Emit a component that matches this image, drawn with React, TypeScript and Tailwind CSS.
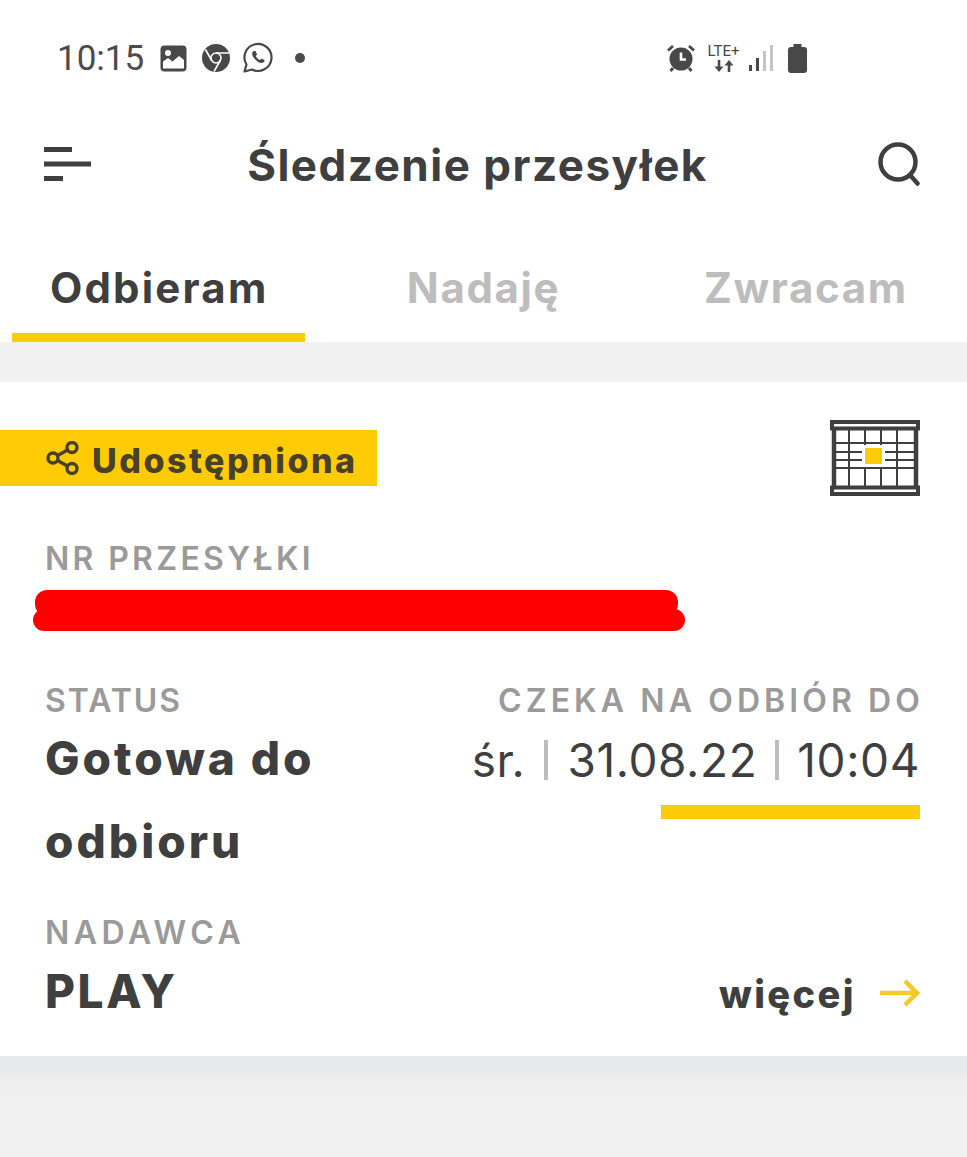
const font = { fontFamily: '"Inter", "Noto Sans", sans-serif' };

function PhotoIcon() {
  return (
    <svg width="27" height="27" viewBox="0 0 27 27">
      <rect x="0.5" y="0.5" width="26" height="26" rx="4" fill="#484848" />
      <circle cx="8" cy="8" r="3" fill="#fff" />
      <path d="M3 23.500v-7l5-3.500 4.500 3.500L19 11l5 4v8.500z" fill="#fff" />
    </svg>
  );
}

function ChromeIcon() {
  return (
    <svg width="28" height="28" viewBox="0 0 28 28">
      <circle cx="14" cy="14" r="14" fill="#484848" />
      <circle cx="14" cy="14" r="5" fill="#484848" stroke="#fff" strokeWidth="1.600" />
      <path d="M14 9h13M9.700 16.500L3.500 5.500M18.300 16.500L12 27.500" stroke="#fff" strokeWidth="1.600" fill="none" />
    </svg>
  );
}

function WhatsappIcon() {
  return (
    <svg width="32" height="32" viewBox="0 0 32 32" fill="none">
      <path d="M2.500 29.500l2-7A13.500 13.500 0 1 1 10 27.500z" stroke="#484848" strokeWidth="2.200" strokeLinejoin="round" />
      <path d="M11.500 9c-2 1.500-1.800 4 .5 7s5 5 7.500 5c2 0 3.500-1.500 3-3l-3-1.500-1.500 1.500c-1.500-.5-3.500-2.500-4.200-4l1.300-1.500L13.500 9z" fill="#484848" />
    </svg>
  );
}

function AlarmIcon() {
  return (
    <svg width="28" height="28" viewBox="0 0 28 28">
      <circle cx="14" cy="15" r="11.500" fill="#484848" />
      <path d="M14 8.500V15.500H19" stroke="#fff" strokeWidth="2.600" fill="none" />
      <path d="M1 6.500L6 2M27 6.500L22 2M6 24l-2.500 3M22 24l2.500 3" stroke="#484848" strokeWidth="2.800" fill="none" />
    </svg>
  );
}

function SignalIcon() {
  return (
    <svg width="25" height="28" viewBox="0 0 25 28">
      <rect x="0" y="21" width="3" height="6" fill="#484848" />
      <rect x="7" y="14" width="3" height="13" fill="#484848" />
      <rect x="14" y="7" width="3" height="20" fill="#c4c4c4" />
      <rect x="21" y="1" width="3" height="26" fill="#c4c4c4" />
    </svg>
  );
}

function BatteryIcon() {
  return (
    <svg width="19" height="29" viewBox="0 0 19 29">
      <path d="M5.500 0h8v3h2.500a3 3 0 0 1 3 3V26a3 3 0 0 1-3 3H3a3 3 0 0 1-3-3V6a3 3 0 0 1 3-3h2.500z" fill="#484848" />
    </svg>
  );
}

function DataArrows() {
  return (
    <svg width="20" height="12" viewBox="0 0 20 12" fill="none" stroke="#484848">
      <path d="M5 0V8" strokeWidth="2.600" />
      <path d="M0.500 6.500H9.500L5 12z" fill="#484848" strokeWidth="0" />
      <path d="M15 12V4" strokeWidth="2.600" />
      <path d="M10.500 5.500H19.500L15 0z" fill="#484848" strokeWidth="0" />
    </svg>
  );
}

function StatusBar() {
  return (
    <div className="flex h-[116px] items-center pl-[57px] pr-[160px]">
      <span className="text-[35px] leading-none text-[#4b4b4b]" style={{ fontFamily: '"Roboto", sans-serif' }}>10:15</span>
      <div className="ml-[16px] flex items-center"><PhotoIcon /></div>
      <div className="ml-[15px] flex items-center"><ChromeIcon /></div>
      <div className="ml-[12px] flex items-center"><WhatsappIcon /></div>
      <div className="ml-[21px] h-[10px] w-[10px] rounded-full bg-[#4b4b4b]" />
      <div className="ml-auto flex items-center">
        <AlarmIcon />
        <div className="ml-[11px] flex w-[35px] flex-col items-center gap-[1px] text-[#484848]" style={{ fontFamily: '"Roboto", sans-serif' }}>
          <span className="text-[15px] leading-[15px]">LTE+</span>
          <DataArrows />
        </div>
        <div className="ml-[8px]"><SignalIcon /></div>
        <div className="ml-[14px]"><BatteryIcon /></div>
      </div>
    </div>
  );
}

function Header() {
  return (
    <div className="flex h-[98px] items-center justify-between pl-[44px] pr-[47px]">
      <svg width="48" height="36" viewBox="0 0 48 36">
        <path d="M0 2.500H28M0 17H47M0 31.500H19" stroke="#3f3f3f" strokeWidth="5" fill="none" />
      </svg>
      <h1 className="mr-[15px] text-[44px] font-bold leading-none tracking-[1.5px] text-[#3f3f3f]">Śledzenie przesyłek</h1>
      <svg className="-mt-[2px]" width="42" height="44" viewBox="0 0 42 44" fill="none" stroke="#3f3f3f" strokeWidth="4.500" strokeLinecap="round">
        <circle cx="20" cy="20" r="17.500" />
        <path d="M32 33l7.500 8.500" />
      </svg>
    </div>
  );
}

function Tabs() {
  return (
    <div className="grid h-[128px] grid-cols-3">
      <div className="flex flex-col">
        <div className="flex flex-1 items-center justify-center pt-[27px] pr-[4px] text-[42px] font-bold tracking-[2.2px] text-[#3f3f3f]">Odbieram</div>
        <div className="ml-[12px] h-[9px] w-[293px] bg-[#fccb0a]" />
      </div>
      <div className="flex items-center justify-center pt-[18px] text-[42px] font-bold tracking-[1.6px] text-[#bdbdbd]">Nadaję</div>
      <div className="flex items-center justify-center pt-[18px] text-[42px] font-bold tracking-[1.6px] text-[#bdbdbd]">Zwracam</div>
    </div>
  );
}

function CalendarIcon() {
  return (
    <svg width="90" height="76" viewBox="0 0 90 76">
      <path d="M2 2H88V8.500H2zM2 67.500H88V74H2z" fill="#fff" stroke="#3f3f3f" strokeWidth="4" />
      <path d="M4 9V67M86 9V67" stroke="#3f3f3f" strokeWidth="4.500" />
      <path d="M19 9V67M35 9V67M51 9V67M67 9V67M4 23H86M4 32H86M4 40H86M4 48H86" stroke="#3f3f3f" strokeWidth="2" />
      <rect x="32" y="25" width="23" height="22" fill="#fff" />
      <rect x="35" y="28" width="17" height="16" fill="#fccb0a" />
    </svg>
  );
}

function Card() {
  return (
    <div className="bg-white pt-[38px] pb-[34px]">
      <div className="flex items-start justify-between pr-[47px]">
        <div className="mt-[10px] flex h-[56px] w-[377px] items-center bg-[#fecb05] pl-[46px]">
          <svg className="-mt-[1px]" width="33" height="34" viewBox="0 0 33 34" fill="none" stroke="#47402a" strokeWidth="3.400">
            <circle cx="7" cy="17" r="5" />
            <circle cx="26" cy="6.500" r="5" />
            <circle cx="26" cy="27.500" r="5" />
            <path d="M11.500 14.500L21.500 9M11.500 19.500L21.500 25" />
          </svg>
          <span className="ml-[13px] pt-[5px] text-[34px] font-extrabold leading-none tracking-[2.5px] text-[#47402a]">Udostępniona</span>
        </div>
        <CalendarIcon />
      </div>

      <div className="mt-[46px] pl-[45px] text-[32px] font-semibold leading-[34px] tracking-[3.300px] text-[#9a9a9a]">NR PRZESYŁKI</div>
      <div className="mt-[14px]">
        <div className="ml-[35px] h-[26px] w-[643px] rounded-[12px] bg-[#ff0000]" />
        <div className="ml-[33px] -mt-[7px] h-[22px] w-[652px] rounded-[11px] bg-[#ff0000]" />
      </div>

      <div className="mt-[52px] flex justify-between pl-[45px] pr-[47px]">
        <div>
          <div className="text-[32px] font-semibold leading-[36px] tracking-[2px] text-[#9a9a9a]">STATUS</div>
          <div className="-mt-[2px] w-[320px] text-[46px] font-extrabold leading-[83px] tracking-[3px] text-[#3f3f3f]">Gotowa do odbioru</div>
        </div>
        <div className="flex flex-col items-end">
          <div className="-mr-[4px] text-[32px] font-semibold leading-[36px] tracking-[4.100px] text-[#9a9a9a]">CZEKA NA ODBIÓR DO</div>
          <div className="mt-[10px] flex h-[62px] items-center text-[46px] tracking-[0.6px] text-[#3f3f3f]">
            <span>śr.</span>
            <span className="mx-[19px] h-[40px] w-[4px] bg-[#bdbdbd]" />
            <span>31.08.22</span>
            <span className="mx-[18px] h-[40px] w-[4px] bg-[#bdbdbd]" />
            <span>10:04</span>
          </div>
          <div className="mt-[14px] h-[14px] w-[259px] bg-[#fccb0a]" />
        </div>
      </div>

      <div className="mt-[32px] pl-[45px] pr-[47px]">
        <div className="text-[32px] font-semibold leading-[36px] tracking-[4.500px] text-[#9a9a9a]">NADAWCA</div>
        <div className="mt-[9px] flex items-center justify-between">
          <span className="text-[46px] font-extrabold leading-[62px] tracking-[2.600px] text-[#3f3f3f]">PLAY</span>
          <div className="flex items-center pt-[6px]">
            <span className="text-[38px] font-extrabold leading-none tracking-[2.400px] text-[#3f3f3f]">więcej</span>
            <svg className="-mt-[3px] ml-[24px]" width="40" height="28" viewBox="0 0 40 28" fill="none" stroke="#f5c92a" strokeWidth="4.500">
              <path d="M0 14H37M25 2l12 12-12 12" />
            </svg>
          </div>
        </div>
      </div>
    </div>
  );
}

export default function App() {
  return (
    <div className="flex h-[1157px] w-[967px] flex-col overflow-hidden bg-white" style={font}>
      <StatusBar />
      <Header />
      <Tabs />
      <div className="h-[40px] bg-[#f1f1f1]" />
      <Card />
      <div className="flex-1 bg-gradient-to-b from-[#e6e7e8] to-[#f1f1f1] to-[40px]" />
    </div>
  );
}
